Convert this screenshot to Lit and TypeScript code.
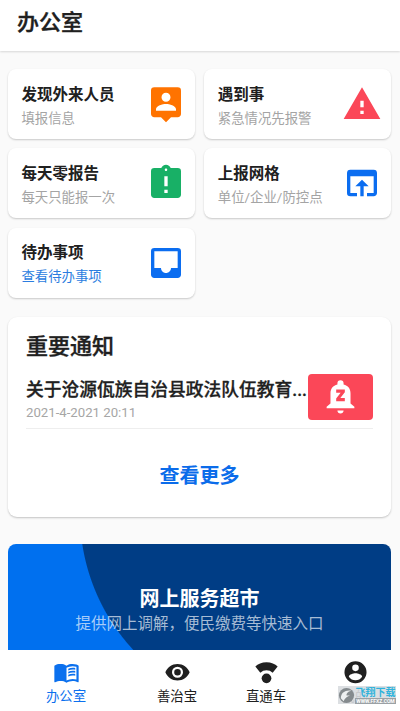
import { LitElement, html, css, svg } from "lit";
import { customElement, property } from "lit/decorators.js";

const icons: Record<string, unknown> = {
  pin: svg`<path d="M19 2H5a2 2 0 0 0-2 2v14c0 1.100.9 2 2 2h4l3 3 3-3h4c1.100 0 2-.9 2-2V4a2 2 0 0 0-2-2zm-7 3.300c1.490 0 2.700 1.210 2.700 2.700S13.490 10.700 12 10.700 9.300 9.490 9.300 8s1.210-2.700 2.700-2.700zM18 16H6v-.9c0-2 4-3.100 6-3.100s6 1.100 6 3.100v.9z"/>`,
  warning: svg`<path d="M1 21h22L12 2 1 21zm12-3h-2v-2h2v2zm0-4h-2v-4h2v4z"/>`,
  clipboard: svg`<path d="M19 3h-4.180C14.400 1.840 13.300 1 12 1s-2.400.84-2.820 2H5a2 2 0 0 0-2 2v14c0 1.100.9 2 2 2h14c1.100 0 2-.9 2-2V5a2 2 0 0 0-2-2zm-6 15h-2v-2h2v2zm0-4h-2V8h2v6zm-1-9.250c-.41 0-.75-.34-.75-.75s.34-.75.75-.75.750.34.750.75-.34.75-.75.75z"/>`,
  open: svg`<path d="M19 4H5a2 2 0 0 0-2 2v12a2 2 0 0 0 2 2h4v-2H5V8h14v10h-4v2h4c1.100 0 2-.9 2-2V6a2 2 0 0 0-2-2zm-7 6l-4 4h3v6h2v-6h3l-4-4z"/>`,
  inbox: svg`<path d="M19 3H5a2 2 0 0 0-2 2v14c0 1.100.88 2 2 2h14c1.100 0 2-.9 2-2V5a2 2 0 0 0-2-2zm0 12h-4c0 1.660-1.350 3-3 3s-3-1.340-3-3H5V5h14v10z"/>`,
  bell: svg`<path d="M12 23c1.100 0 2-.9 2-2h-4c0 1.100.9 2 2 2zm6.500-6.500V10c0-3.070-1.640-5.140-4.500-5.820V3.500a2 2 0 0 0-4 0v.68C7.130 4.860 5.500 6.920 5.500 10v6.500L3 18.600v1h18v-1l-2.500-2.100zm-3.700-7.200L11.900 13h2.900v2H9.200v-1.700L12.100 9.500H9.200v-2h5.600v1.800z"/>`,
  book: svg`<path d="M21 5c-1.110-.35-2.330-.5-3.500-.5-1.950 0-4.050.4-5.500 1.500-1.450-1.100-3.550-1.500-5.500-1.500S2.450 4.900 1 6v14.650c0 .25.25.5.5.5.1 0 .15-.05.25-.05C3.100 20.450 5.050 20 6.500 20c1.950 0 4.050.4 5.500 1.500 1.350-.85 3.800-1.500 5.500-1.500 1.650 0 3.350.3 4.750 1.050.1.050.15.050.25.050.25 0 .5-.25.5-.5V6c-.6-.45-1.250-.75-2-1zm0 13.500c-1.100-.35-2.300-.5-3.500-.5-1.700 0-4.150.65-5.500 1.500V8c1.350-.85 3.800-1.500 5.500-1.500 1.200 0 2.400.15 3.500.5v11.500z"/><path d="M13.600 8.900c2-1 4.300-1.100 6.300-.7v1.500c-2-.4-4.300-.3-6.300.7zm0 2.700c2-1 4.300-1.100 6.300-.7v1.500c-2-.4-4.300-.3-6.300.7zm0 2.700c2-1 4.300-1.100 6.300-.7v1.500c-2-.4-4.300-.3-6.300.7z"/>`,
  eye: svg`<path d="M12 4.500C7 4.500 2.730 7.610 1 12c1.730 4.390 6 7.500 11 7.500s9.270-3.110 11-7.500c-1.730-4.390-6-7.500-11-7.500zM12 17a5 5 0 1 1 0-10 5 5 0 0 1 0 10zm0-8a3 3 0 1 0 0 6 3 3 0 0 0 0-6z"/>`,
  signal: svg`<path d="M12 3C7.800 3 4.100 4.600 1.900 6.800l4.500 5.600a8.500 8.500 0 0 1 11.200 0l4.500-5.600C19.900 4.600 16.200 3 12 3z"/><circle cx="12" cy="17.500" r="4.400"/>`,
  account: svg`<path d="M12 2a10 10 0 1 0 0 20 10 10 0 0 0 0-20zm0 3a3 3 0 1 1 0 6 3 3 0 0 1 0-6zm0 14.200a7.200 7.200 0 0 1-6-3.220c.03-1.990 4-3.080 6-3.080 1.990 0 5.970 1.090 6 3.080a7.200 7.200 0 0 1-6 3.220z"/>`,
};

const icon = (name: string) =>
  html`<svg class="icon" viewBox="0 0 24 24" aria-hidden="true">${icons[name]}</svg>`;

const iconStyle = css`
  .icon { display: block; width: 100%; height: 100%; fill: currentColor; }
`;

@customElement("task-card")
class TaskCard extends LitElement {
  @property() heading = "";
  @property() note = "";
  @property() icon = "";
  @property() tone = "";

  static styles = [iconStyle, css`
    :host {
      display: flex; align-items: center; justify-content: space-between;
      box-sizing: border-box; height: 70px; padding: 0 9px 0 13.400px;
      background: #fff; border-radius: 8px;
      box-shadow: 0 1px 2px rgba(0, 0, 0, 0.2);
    }
    .copy { white-space: nowrap; padding-top: 4px; }
    .heading { font-size: 15.500px; line-height: 24px; font-weight: 700; color: #202020; }
    .note { font-size: 13.400px; line-height: 23px; color: #a4a4a4; }
    .note.inbox { color: #2b7de0; }
    .glyph { width: 40px; height: 40px; flex: none; }
    .orange { color: #ff7300; }
    .red { color: #fb4758; }
    .green { color: #18b066; }
    .blue { color: #0b6df0; }
  `];

  render() {
    return html`
      <div class="copy">
        <div class="heading">${this.heading}</div>
        <div class="note ${this.icon}">${this.note}</div>
      </div>
      <div class="glyph ${this.tone}">${icon(this.icon)}</div>
    `;
  }
}

const tasks = [
  ["发现外来人员", "填报信息", "pin", "orange"],
  ["遇到事", "紧急情况先报警", "warning", "red"],
  ["每天零报告", "每天只能报一次", "clipboard", "green"],
  ["上报网格", "单位/企业/防控点", "open", "blue"],
  ["待办事项", "查看待办事项", "inbox", "blue"],
];

const tabs = [
  ["办公室", "book"],
  ["善治宝", "eye"],
  ["直通车", "signal"],
  ["我的", "account"],
];

@customElement("app-root")
class AppRoot extends LitElement {
  static styles = [iconStyle, css`
    :host {
      position: relative; display: flex; flex-direction: column;
      height: 711px; overflow: hidden; background: #fafafa;
      font-family: Roboto, "Noto Sans CJK SC", sans-serif; color: #202020;
    }
    header {
      flex: none; box-sizing: border-box; height: 51px; padding: 7px 17px 0;
      background: #fff; box-shadow: 0 1px 2px rgba(0, 0, 0, 0.14);
      font-size: 22px; line-height: 32px; font-weight: 500;
      -webkit-text-stroke: 0.35px currentColor;
    }
    main { flex: 1; min-height: 0; overflow: hidden; padding: 18px 9px 0 8px; }
    .tasks { display: grid; grid-template-columns: 187px 187px; gap: 9.400px; }
    .notices {
      box-sizing: border-box; height: 200px; margin-top: 19px; padding: 14px 18px 0;
      background: #fff; border-radius: 9px; box-shadow: 0 1px 2px rgba(0, 0, 0, 0.22);
    }
    .title {
      font-size: 22px; line-height: 32px; font-weight: 500;
      -webkit-text-stroke: 0.35px currentColor;
    }
    .notice {
      display: flex; justify-content: space-between; box-sizing: border-box;
      height: 66px; padding-top: 11px; border-bottom: 1px solid #eee;
    }
    .text { width: 282px; }
    .subject {
      font-size: 17.750px; line-height: 33px; font-weight: 500;
      white-space: nowrap; -webkit-text-stroke: 0.3px currentColor;
    }
    .date { font-size: 13.200px; line-height: 12px; color: #a6a6a6; }
    .alarm {
      display: flex; align-items: center; justify-content: center;
      width: 65px; height: 46px; border-radius: 4px; background: #fb4758; color: #fff;
    }
    .bell { width: 37px; height: 37px; }
    .more {
      margin-top: 33px; text-align: center; font-size: 20px; line-height: 28px;
      font-weight: 700; color: #0b6cea;
    }
    .banner {
      box-sizing: border-box; height: 134px; margin-top: 27px; padding-top: 41px;
      border-radius: 8px; text-align: center; color: #fff;
      background: radial-gradient(circle at 272px -30px, #003d85 199.500px, #0070ef 200.500px);
    }
    .service { font-size: 20px; line-height: 28px; font-weight: 700; }
    .detail { font-size: 15.500px; line-height: 22px; color: rgba(255, 255, 255, 0.66); }
    nav {
      position: relative; flex: none; display: grid; height: 61.500px;
      grid-template-columns: 132px 90px 88px 90px; background: #fff;
    }
    .tab {
      display: flex; flex-direction: column; align-items: center; gap: 1px;
      padding-top: 9.500px; font-size: 13.400px; line-height: 20px;
    }
    .tab-icon { width: 27px; height: 26.500px; }
    .active { color: #0b70ee; }
    .mark {
      position: absolute; right: 4px; bottom: 7px; display: flex; align-items: center;
      width: 58px; height: 18px; background: rgba(216, 220, 223, 0.9);
    }
    .seal { width: 17px; height: 17px; flex: none; }
    .brand { width: 41px; white-space: nowrap; text-align: center; }
    .name { font-size: 10px; line-height: 11px; font-weight: 700; color: #2eb3dc; }
    .site { font-size: 5px; line-height: 6px; font-weight: 700; color: #fff; background: #9ba1a5; }
  `];

  render() {
    return html`
      <header>办公室</header>
      <main>
        <div class="tasks">
          ${tasks.map(([heading, note, glyph, tone]) => html`
            <task-card .heading=${heading} .note=${note} .icon=${glyph} .tone=${tone}></task-card>
          `)}
        </div>
        <section class="notices">
          <div class="title">重要通知</div>
          <div class="notice">
            <div class="text">
              <div class="subject">关于沧源佤族自治县政法队伍教育...</div>
              <div class="date">2021-4-2021 20:11</div>
            </div>
            <div class="alarm"><div class="bell">${icon("bell")}</div></div>
          </div>
          <div class="more">查看更多</div>
        </section>
        <section class="banner">
          <div class="service">网上服务超市</div>
          <div class="detail">提供网上调解，便民缴费等快速入口</div>
        </section>
      </main>
      <nav>
        ${tabs.map(([label, glyph], i) => html`
          <div class="tab ${i === 0 ? "active" : ""}">
            <div class="tab-icon">${icon(glyph)}</div>
            <div>${label}</div>
          </div>
        `)}
        <div class="mark">
          <svg class="seal" viewBox="0 0 18 18" aria-hidden="true">
            <circle cx="9" cy="9" r="8" fill="#858b8e" />
            <path d="M3 12C3 6 8 3 14 4c-4 1-5 3-5 5h4c-3 1-5 2-7 6z" fill="#edf0f1" />
          </svg>
          <div class="brand">
            <div class="name">飞翔下载</div>
            <div class="site">WWW.FFXZ.COM</div>
          </div>
        </div>
      </nav>
    `;
  }
}
